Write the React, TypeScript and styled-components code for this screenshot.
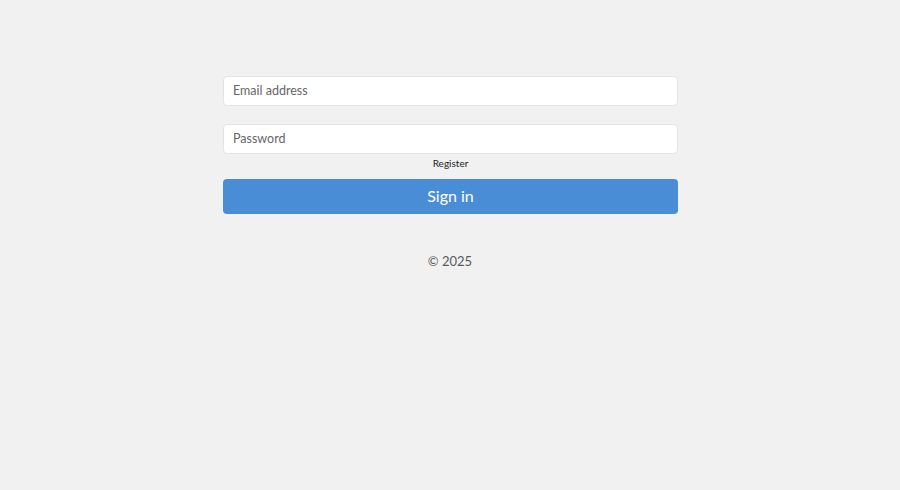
import React from "react";
import styled, { createGlobalStyle } from "styled-components";

const Global = createGlobalStyle`
  html, body { margin: 0; padding: 0; background: #f1f1f1; }
  body { font-family: Lato, "Noto Sans", sans-serif; }
  * { box-sizing: border-box; }
`;

const Page = styled.div`
  min-height: 490px;
  display: flex;
  flex-direction: column;
  align-items: center;
  padding-top: 76px;
`;

const Form = styled.form`
  width: 455px;
  margin-left: 1px;
  display: flex;
  flex-direction: column;
`;

const Input = styled.input<{ $gap?: number }>`
  height: 30px;
  width: 100%;
  border: 1px solid #e3e3e3;
  border-radius: 4px;
  background: #ffffff;
  padding: 0 9px 2px;
  font-family: inherit;
  font-size: 12.5px;
  color: #333;
  margin-bottom: ${(p) => p.$gap ?? 0}px;
  outline: none;
  &::placeholder { color: #666; }
`;

const RegisterLink = styled.a`
  align-self: center;
  font-size: 10px;
  color: #222;
  text-decoration: none;
  line-height: 13px;
  margin-top: 3px;
  margin-bottom: 9px;
`;

const Button = styled.button`
  height: 35px;
  width: 100%;
  border: none;
  border-radius: 4px;
  background: #4a8dd7;
  color: #ffffff;
  font-family: inherit;
  font-size: 16px;
  padding: 0 0 2px;
  cursor: pointer;
`;

const Footer = styled.div`
  margin-top: 39px;
  font-size: 13px;
  color: #5a5a5a;
`;

export default function App() {
  return (
    <>
      <Global />
      <Page>
        <Form onSubmit={(e) => e.preventDefault()}>
          <Input type="email" placeholder="Email address" $gap={18} />
          <Input type="password" placeholder="Password" />
          <RegisterLink href="#">Register</RegisterLink>
          <Button type="submit">Sign in</Button>
        </Form>
        <Footer>© 2025</Footer>
      </Page>
    </>
  );
}
